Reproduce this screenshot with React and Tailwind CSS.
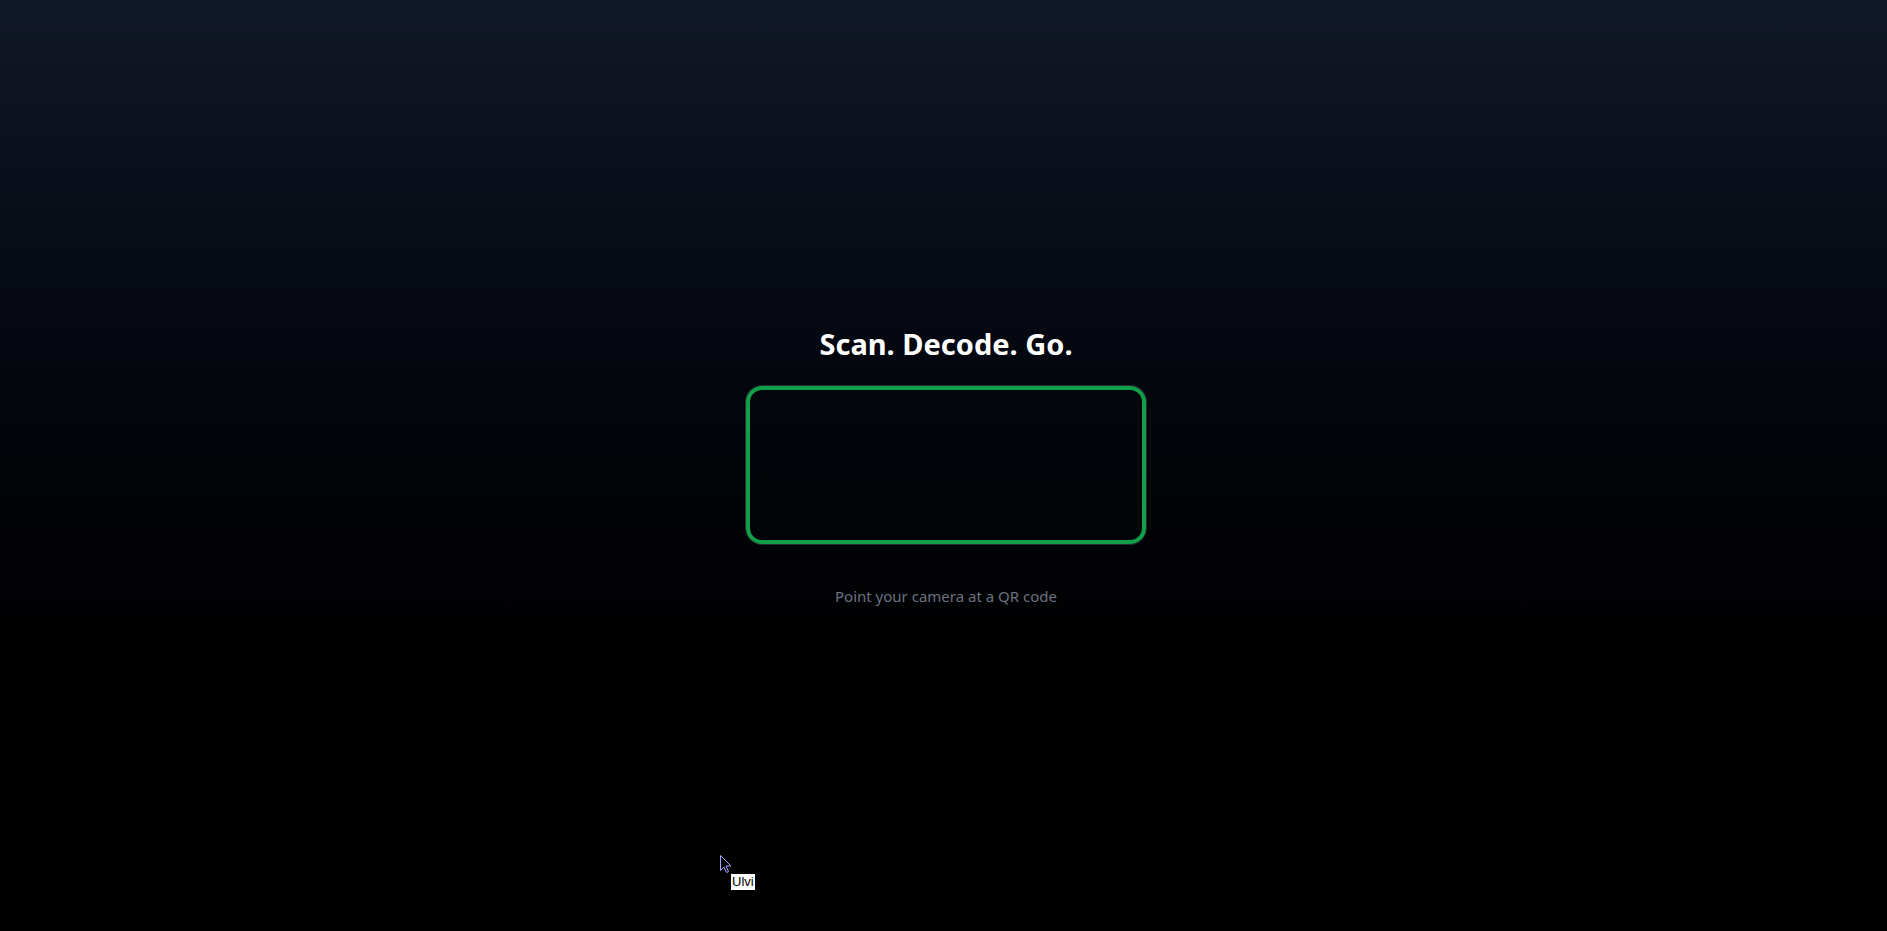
import React from 'react';

const App = () => {
  return (
    <div
      className="relative min-h-screen w-full bg-gradient-to-b from-[#111827] to-black flex flex-col items-center justify-center pl-[5px] pt-[3px] text-white"
      style={{ fontFamily: '"Noto Sans", "Open Sans", sans-serif' }}
    >
      <h1 className="text-[29px] leading-9 font-bold mb-6">Scan. Decode. Go.</h1>

      {/* scanner frame */}
      <div className="w-[400px] h-[158px] rounded-2xl border-4 border-[#129f4a] bg-[#03050a]/60 shadow-[0_0_0_1px_rgba(75,85,99,0.5)]" />

      <p className="mt-10 text-[15px] leading-6 text-[#6b7280]">Point your camera at a QR code</p>

      {/* mouse pointer + tooltip left in the screenshot */}
      <div className="absolute left-[720px] top-[855px]">
        <svg width="12" height="19" viewBox="0 0 12 19">
          <path d="M0.5 0.5 L0.5 15.5 L4 12 L6.5 17.5 L8.5 16.5 L6 11 L11 11 Z" fill="#000" stroke="#a5a5ff" strokeWidth="1" />
        </svg>
      </div>
      <div
        className="absolute left-[731px] top-[874px] bg-white text-black text-[13px] leading-[16px] px-px"
        style={{ fontFamily: '"Liberation Sans", Arial, sans-serif' }}
      >
        Ulvi
      </div>
    </div>
  );
};

export default App;
